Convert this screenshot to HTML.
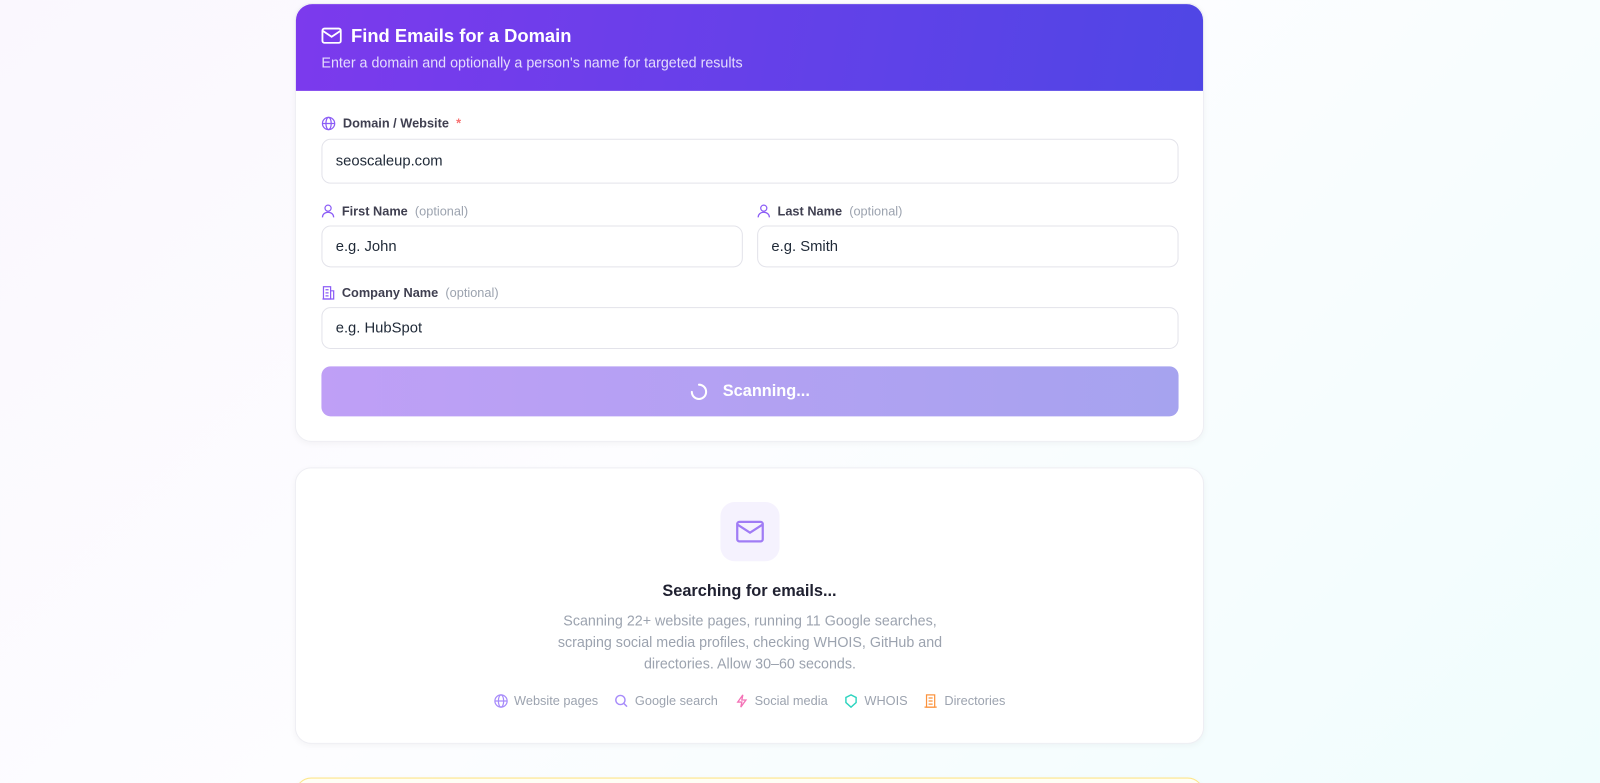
<!DOCTYPE html>
<html><head><meta charset="utf-8"><style>
*{box-sizing:border-box;margin:0;padding:0}
html,body{width:1600px;height:783px;overflow:hidden}
body{font-family:"Liberation Sans",sans-serif;background:linear-gradient(135deg,#faf7fe 0%,#fdfdff 45%,#f0fdfd 100%);position:relative}
#w{position:absolute;left:0;top:0;width:1568px;height:800px;transform:scale(1.0204);transform-origin:0 0}
.card{position:absolute;left:289px;width:891px;background:#fff;border:1px solid #eeeef3;border-radius:16px;box-shadow:0 2px 6px rgba(0,0,0,.04)}
.hdr{height:85px;border-radius:16px 16px 0 0;background:linear-gradient(100deg,#7c3aed,#4f46e5);color:#fff;padding:20px 25px}
.hdr h1{font-size:18px;font-weight:bold;display:flex;align-items:center;gap:9px;height:22px}
.hdr p{font-size:14px;color:#e4dcfd;margin-top:7px}
.lbl{position:absolute;font-size:12.5px;font-weight:bold;color:#3f3f50;display:flex;align-items:center;gap:7px}
.lbl span.o{font-weight:normal;color:#9ca3af}
.inp{position:absolute;border:1px solid #e3e3ea;border-radius:9px;font-size:14.5px;color:#1f2937;padding-left:13px;display:flex;align-items:center}
.btn{position:absolute;left:25px;top:355px;width:840px;height:49px;border-radius:9px;background:linear-gradient(90deg,#bf9ff6,#a6a3ef);color:#fff;font-weight:bold;font-size:16px;display:flex;align-items:center;justify-content:center;gap:14px}
.chips{position:absolute;top:221px;left:0;width:100%;display:flex;justify-content:center;gap:16px;font-size:12.5px;color:#9ca3af}
.chips div{display:flex;align-items:center;gap:6px}
</style></head><body><div id="w">
<div class="card" style="top:3px;height:430px">
 <div class="hdr"><h1><svg width="20" height="16" viewBox="0 0 20 16" fill="none" stroke="#fff" stroke-width="1.8"><rect x="1" y="1" width="18" height="14" rx="2"/><path d="M1 3l9 6 9-6"/></svg>Find Emails for a Domain</h1><p>Enter a domain and optionally a person's name for targeted results</p></div>
 <div class="lbl" style="left:25px;top:110px"><svg width="14" height="14" viewBox="0 0 14 14" fill="none" stroke="#8b5cf6" stroke-width="1.2"><circle cx="7" cy="7" r="6"/><ellipse cx="7" cy="7" rx="2.6" ry="6"/><path d="M1 7h12"/></svg>Domain / Website <span style="color:#f87171">*</span></div>
 <div class="inp" style="left:25px;top:132px;width:840px;height:44px">seoscaleup.com</div>
 <div class="lbl" style="left:25px;top:196px"><svg width="13" height="14" viewBox="0 0 13 14" fill="none" stroke="#8b5cf6" stroke-width="1.2"><circle cx="6.5" cy="4" r="3"/><path d="M1 13c0-3 2.5-5 5.5-5s5.5 2 5.5 5"/></svg>First Name <span class="o">(optional)</span></div>
 <div class="inp" style="left:25px;top:217px;width:413px;height:41px">e.g. John</div>
 <div class="lbl" style="left:452px;top:196px"><svg width="13" height="14" viewBox="0 0 13 14" fill="none" stroke="#8b5cf6" stroke-width="1.2"><circle cx="6.5" cy="4" r="3"/><path d="M1 13c0-3 2.5-5 5.5-5s5.5 2 5.5 5"/></svg>Last Name <span class="o">(optional)</span></div>
 <div class="inp" style="left:452px;top:217px;width:413px;height:41px">e.g. Smith</div>
 <div class="lbl" style="left:25px;top:276px"><svg width="13" height="14" viewBox="0 0 13 14" fill="none" stroke="#8b5cf6" stroke-width="1.2"><rect x="2" y="1" width="7" height="12"/><path d="M9 5h3v8H1M4 4h3M4 7h3M4 10h3"/></svg>Company Name <span class="o">(optional)</span></div>
 <div class="inp" style="left:25px;top:297px;width:840px;height:41px">e.g. HubSpot</div>
 <div class="btn"><svg width="18" height="18" viewBox="0 0 18 18" fill="none" stroke="#fff" stroke-width="2" stroke-linecap="round"><path d="M9 2a7 7 0 1 1-7 7"/></svg>Scanning...</div>
</div>
<div class="card" style="top:458px;height:271px">
 <div style="position:absolute;left:416px;top:33px;width:58px;height:58px;border-radius:14px;background:#f5f2fe;display:flex;align-items:center;justify-content:center"><svg width="28" height="22" viewBox="0 0 28 22" fill="none" stroke="#a07cf5" stroke-width="2.2"><rect x="1.5" y="1.5" width="25" height="19" rx="2"/><path d="M1.5 4l12.5 8 12.5-8"/></svg></div>
 <div style="position:absolute;top:112px;width:100%;text-align:center;font-size:16px;font-weight:bold;color:#1f2030">Searching for emails...</div>
 <div style="position:absolute;top:139px;left:240px;width:410px;text-align:center;font-size:14px;line-height:21px;color:#9ca3af">Scanning 22+ website pages, running 11 Google searches, scraping social media profiles, checking WHOIS, GitHub and directories. Allow 30–60 seconds.</div>
 <div class="chips">
  <div><svg width="14" height="14" viewBox="0 0 14 14" fill="none" stroke="#a78bfa" stroke-width="1.2"><circle cx="7" cy="7" r="6"/><ellipse cx="7" cy="7" rx="2.6" ry="6"/><path d="M1 7h12"/></svg>Website pages</div>
  <div><svg width="14" height="14" viewBox="0 0 14 14" fill="none" stroke="#a78bfa" stroke-width="1.4"><circle cx="6" cy="6" r="4.5"/><path d="M9.5 9.5l3 3"/></svg>Google search</div>
  <div><svg width="14" height="14" viewBox="0 0 14 14" fill="none" stroke="#f472b6" stroke-width="1.3"><path d="M8 1L3 8h4l-1 5 5-7H7z"/></svg>Social media</div>
  <div><svg width="14" height="14" viewBox="0 0 14 14" fill="none" stroke="#2dd4bf" stroke-width="1.4"><path d="M7 1l5 2.5v5L7 13 2 8.5v-5z"/></svg>WHOIS</div>
  <div><svg width="14" height="14" viewBox="0 0 14 14" fill="none" stroke="#fb923c" stroke-width="1.2"><rect x="3" y="1" width="8" height="12"/><path d="M1 13h12M5 4h4M5 7h4M5 10h4"/></svg>Directories</div>
 </div>
</div>
<div class="card" style="top:762px;height:40px;border-color:#fde68a;background:#fffef5"></div>
</div></body></html>
